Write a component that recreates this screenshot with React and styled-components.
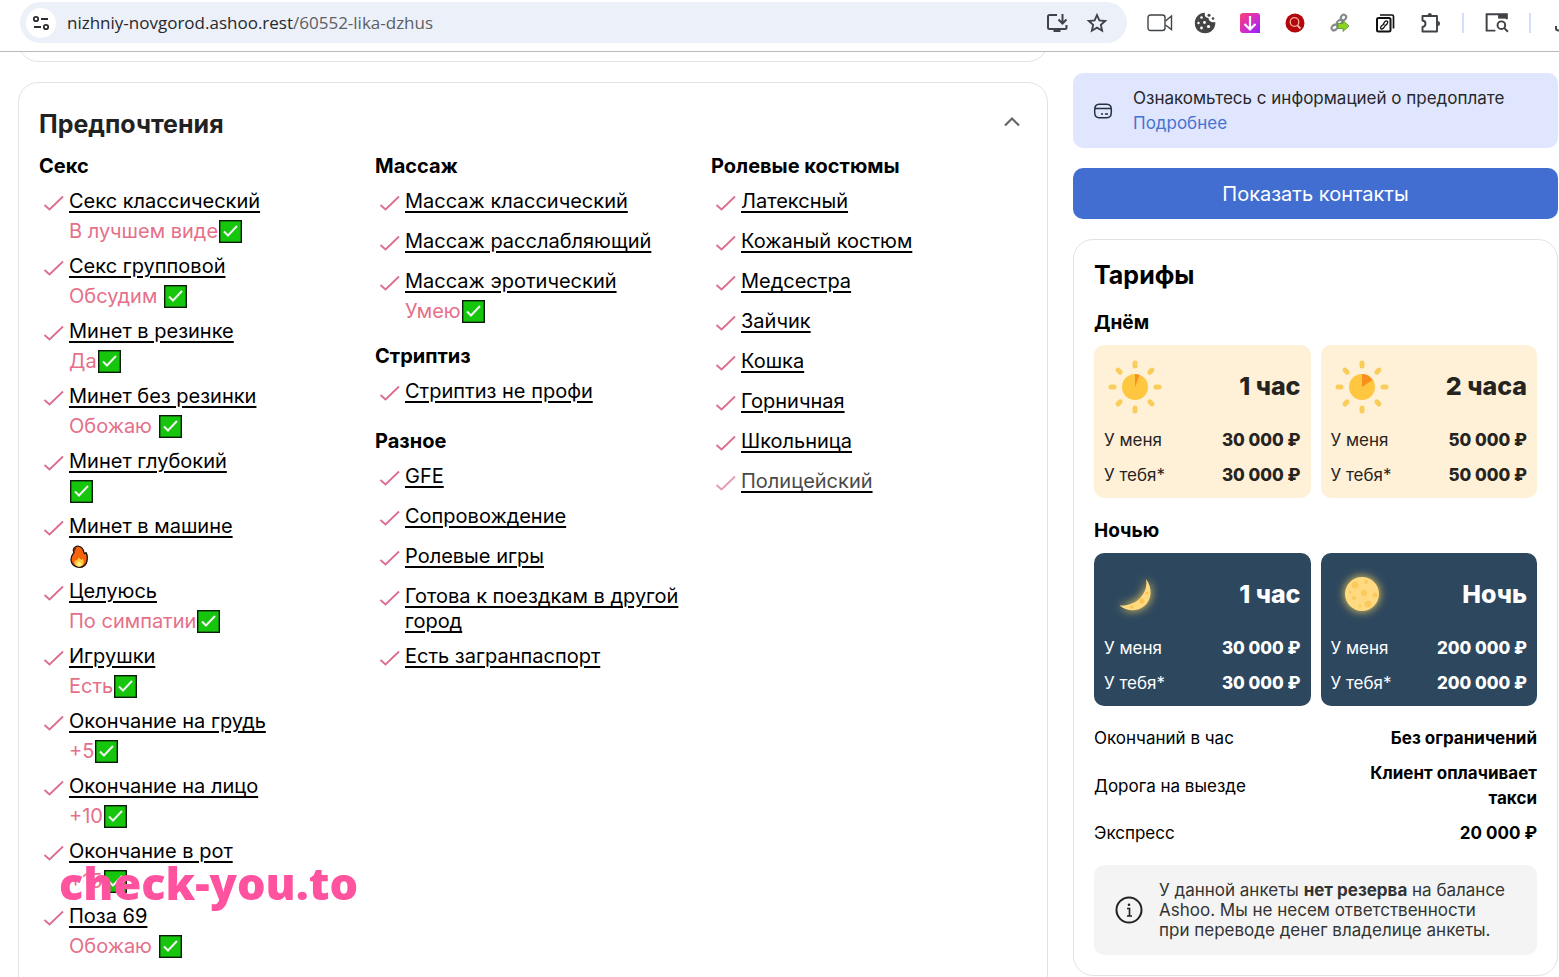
import React from "react";
import styled, { createGlobalStyle } from "styled-components";

const GlobalStyle = createGlobalStyle`
  * {
    box-sizing: border-box;
  }

  body {
    margin: 0;
    background: #ffffff;
    color: #000000;
    font-family: Inter, "Liberation Sans", sans-serif;
    font-size: 20px;
    line-height: 25px;
  }

  h2, h3, p, ul, dl, dd {
    margin: 0;
    padding: 0;
  }

  ul {
    list-style: none;
  }

  button {
    font-family: inherit;
    border: none;
    background: none;
    padding: 0;
    cursor: pointer;
  }
`;

const Layout = styled.div`
  display: flex;
  flex-direction: column;
  height: 100vh;
`;

/* browser bar */

const TopBar = styled.header`
  display: flex;
  align-items: center;
  flex: none;
  padding: 2px 0 8px 20px;
  border-bottom: 1px solid #b9b9b9;
  overflow: hidden;
`;

const AddressBar = styled.div`
  flex: 1;
  min-width: 0;
  height: 41px;
  margin-right: 10px;
  padding: 0 10px 0 6px;
  display: flex;
  align-items: center;
  border-radius: 21px;
  background: #ecf0f9;
`;

const SiteInfo = styled.button`
  flex: none;
  width: 30px;
  height: 30px;
  margin-right: 11px;
  display: flex;
  align-items: center;
  justify-content: center;
  border-radius: 50%;
  background: #ffffff;
`;

const AddressText = styled.div`
  flex: 1;
  min-width: 0;
  color: #5b5e63;
  font-family: "Open Sans", sans-serif;
  font-size: 17px;
  white-space: nowrap;

  b {
    color: #26282b;
    font-weight: 400;
  }
`;

const BarButton = styled.button`
  flex: none;
  width: ${({ $width }) => $width || 45}px;
  height: 40px;
  display: flex;
  align-items: center;
  justify-content: center;
  color: #3f4246;
`;

const BarDivider = styled.span`
  flex: none;
  width: 2px;
  height: 20px;
  margin: 0 10px;
  background: #d2defa;
`;

/* page */

const Scroller = styled.main`
  flex: 1;
  min-height: 0;
  overflow-y: auto;
  scrollbar-width: none;
  display: grid;
  grid-template-columns: minmax(0, 1fr) 485px;
  gap: 25px;
  align-items: start;
  padding: 0 1px 0 18px;
`;

const Card = styled.section`
  padding: 20px;
  border: 1px solid #e2e2e2;
  border-radius: 20px;
  background: #ffffff;
`;

const PreviousCard = styled(Card)`
  margin: -32px 0 20px;
`;

const CardHeader = styled.div`
  display: flex;
  align-items: center;
  justify-content: space-between;
  height: 41px;
  margin-bottom: 10px;
  padding-right: 5px;
`;

const CardTitle = styled.h2`
  color: ${({ $color }) => $color || "#000000"};
  font-size: 25px;
  line-height: 30px;
  font-weight: 700;
`;

const Columns = styled.div`
  display: grid;
  grid-template-columns: repeat(3, minmax(0, 1fr));
  gap: 20px;
`;

const Group = styled.div`
  padding-bottom: 10px;

  h3 {
    margin-bottom: 10px;
    font-size: 20px;
    font-weight: 700;
  }
`;

const Item = styled.li`
  display: grid;
  grid-template-columns: 30px minmax(0, 1fr);
  padding-bottom: 10px;

  > svg {
    margin: 5px 0 0 4px;
    opacity: ${({ $faded }) => ($faded ? 0.7 : 1)};
  }
`;

const ItemName = styled.div`
  min-height: 30px;

  a {
    color: ${({ $faded }) => ($faded ? "#4a4a4a" : "#000000")};
    text-decoration: underline;
    text-decoration-color: #000000;
    text-decoration-thickness: 2px;
    text-underline-offset: 3px;
  }
`;

const ItemNote = styled.p`
  grid-column: 2;
  display: flex;
  align-items: center;
  height: 25px;
  color: #e5708a;
  white-space: pre;

  svg {
    margin-left: 1px;
  }
`;

/* sidebar */

const Sidebar = styled.aside`
  padding-top: 21px;
`;

const Prepay = styled.div`
  display: flex;
  align-items: center;
  gap: 20px;
  padding: 13px 20px 12px;
  border-radius: 10px;
  background: #dfe6fe;
  color: #26282b;
  font-size: 17px;

  a {
    display: block;
    color: #4872cf;
    text-decoration: none;
  }
`;

const ContactButton = styled.button`
  display: block;
  width: 100%;
  height: 51px;
  margin: 20px 0;
  border-radius: 10px;
  background: #416ed0;
  color: #ffffff;
  font-size: 20px;
`;

const PeriodTitle = styled.h3`
  margin: 20px 0 10px;
  font-size: 19px;
  font-weight: 700;
`;

const Prices = styled.div`
  display: grid;
  grid-template-columns: 1fr 1fr;
  gap: 10px;
`;

const PriceCard = styled.div`
  display: flex;
  flex-direction: column;
  gap: 10px;
  padding: 10px;
  border-radius: 10px;
  background: ${({ $night }) => ($night ? "#2d475e" : "#fff1d8")};
  color: ${({ $night }) => ($night ? "#ffffff" : "#26241f")};
  font-size: 17px;
`;

const PriceHead = styled.div`
  display: flex;
  align-items: center;
  justify-content: space-between;
  height: 63px;
  font-size: 25px;
  font-weight: 800;
`;

const PriceRow = styled.div`
  display: flex;
  justify-content: space-between;

  b {
    font-weight: 800;
  }
`;

const Details = styled.dl`
  display: flex;
  flex-direction: column;
  gap: 10px;
  margin: 20px 0 19px;
  font-size: 17px;
`;

const DetailRow = styled.div`
  display: flex;
  align-items: center;
  justify-content: space-between;

  dd {
    max-width: 190px;
    font-weight: 700;
    text-align: right;
  }
`;

const Notice = styled.div`
  display: flex;
  align-items: center;
  gap: 15px;
  padding: 15px 20px;
  border-radius: 10px;
  background: #f4f4f4;
  color: #333333;
  font-size: 17px;
  line-height: 20px;

  svg {
    flex: none;
  }
`;

const Watermark = styled.div`
  position: fixed;
  left: 59px;
  bottom: 64px;
  color: #ff529f;
  font-family: "Open Sans", sans-serif;
  font-size: 45px;
  line-height: 60px;
  font-weight: 800;
  pointer-events: none;
`;

/* drawings */

const CheckIcon = () => (
  <svg width="22" height="20" viewBox="0 0 22 20" fill="none" stroke="#dc6d8c" strokeWidth="1.800">
    <path d="M1.500 11L6.500 15.500L20 2.500" />
  </svg>
);

const GreenCheck = () => (
  <svg width="23" height="23" viewBox="0 0 23 23">
    <rect x="0.700" y="0.700" width="21.600" height="21.600" fill="#16c60c" stroke="#0b1d0a" strokeWidth="1.400" />
    <path d="M5 11.500L9 15.500L18 6" fill="none" stroke="#f2f2f2" strokeWidth="2" />
  </svg>
);

const Flame = () => (
  <svg width="18" height="23" viewBox="0 0 18 23">
    <path
      d="M6 1.500C8 .5 11.500 1.500 13 4.500C14 6.500 13.500 8 14.500 8.500C15.300 8.500 15.500 7.500 16.200 7.800C17.500 10 17.500 13 17 16C16.200 20 13 22.300 9 22.300C4.500 22.300 1 19 1 14.500C1 11 2.500 9.500 4 7.500C3 5.500 3 3 6 1.500Z"
      fill="#f7630c"
      stroke="#1c100a"
      strokeWidth="1.300"
    />
    <path d="M3.800 7.200C3 5 4 2.500 6.200 1.900C6.500 4 5.500 5.500 3.800 7.200Z" fill="#7b2a12" />
    <path d="M9 12.500C10 14 11 14 11.500 15C12.300 14.800 12.300 14 13 13.800C14.500 18 13 21.400 9.500 21.600C5.500 21.600 3.500 18.500 5 15C6 16 7 15.500 7.500 14.500Z" fill="#ffc83d" />
    <path d="M9 16.500L12 19C11.500 21 10.500 21.500 9 21.500C7.500 21.500 6.500 20.500 6.500 19Z" fill="#fff08a" />
  </svg>
);

const RAYS = [0, 45, 90, 135, 180, 225, 270, 315];

const Sun = ({ slice }) => (
  <svg width="62" height="62" viewBox="0 0 62 62">
    {RAYS.map((angle) => (
      <rect key={angle} x="28.500" y="4.500" width="5" height="8" rx="2.500" fill="#f9cd59" transform={`rotate(${angle} 31 31)`} />
    ))}
    <circle cx="31" cy="31" r="13" fill="#ffc740" />
    <path d={slice} fill="#f9901e" />
  </svg>
);

const Crescent = () => (
  <svg width="62" height="62" viewBox="0 0 62 62">
    <defs>
      <filter id="crescentGlow" x="-60%" y="-60%" width="220%" height="220%">
        <feGaussianBlur stdDeviation="5" />
      </filter>
    </defs>
    <path d="M42 15C49 24 48 37 39 43C32 48 22 47 15.500 41.500C24 42 32 39 37 33C42 27 43 21 42 15Z" fill="#ffd65c" filter="url(#crescentGlow)" />
    <path d="M42 15C49 24 48 37 39 43C32 48 22 47 15.500 41.500C24 42 32 39 37 33C42 27 43 21 42 15Z" fill="#ffda80" />
    <circle cx="38" cy="37" r="2.500" fill="#fbc552" />
    <circle cx="43" cy="29" r="1.500" fill="#fbc552" />
    <circle cx="28" cy="43" r="1.800" fill="#fbc552" />
  </svg>
);

const FullMoon = () => (
  <svg width="62" height="62" viewBox="0 0 62 62">
    <defs>
      <filter id="moonGlow" x="-50%" y="-50%" width="200%" height="200%">
        <feGaussianBlur stdDeviation="5" />
      </filter>
    </defs>
    <circle cx="31" cy="30" r="17" fill="#ffd65c" filter="url(#moonGlow)" />
    <circle cx="31" cy="30" r="17" fill="#ffda80" />
    <g fill="#fbc95c">
      <circle cx="24" cy="21" r="3.500" />
      <circle cx="33" cy="29" r="3" />
      <circle cx="37" cy="40" r="3.500" />
      <circle cx="23" cy="34" r="2" />
      <circle cx="35" cy="18" r="2" />
      <circle cx="44" cy="31" r="2.500" />
      <circle cx="19" cy="28" r="1.500" />
      <circle cx="29" cy="42" r="1.500" />
    </g>
  </svg>
);

const CardIcon = () => (
  <svg width="20" height="20" viewBox="0 0 20 20" fill="none" stroke="#26303f" strokeWidth="1.500">
    <path d="M1.800 7.500C2 4.500 3 3.500 6 3.300Q10 3 14 3.300C17 3.500 18 4.500 18.200 7.500Q18.500 10 18.200 12.500C18 15.500 17 16.500 14 16.700Q10 17 6 16.700C3 16.500 2 15.500 1.800 12.500Q1.500 10 1.800 7.500ZM2 7.500H18M8 13H10M12 13H15" />
  </svg>
);

const InfoIcon = () => (
  <svg width="30" height="30" viewBox="0 0 30 30" fill="none" stroke="#222222" strokeWidth="2">
    <circle cx="15" cy="15" r="12.500" />
    <path d="M13 13.500H15.500V21M13 21H18" strokeWidth="1.600" />
    <circle cx="15" cy="9.800" r="1.300" fill="#222222" stroke="none" />
  </svg>
);

const TuneIcon = () => (
  <svg width="18" height="18" viewBox="0 0 18 18" fill="none" stroke="#2b2d30" strokeWidth="1.800">
    <circle cx="4" cy="5" r="2.200" />
    <path d="M9 5H16M2 13H9" />
    <circle cx="14" cy="13" r="2.200" />
  </svg>
);

const InstallIcon = () => (
  <svg width="24" height="24" viewBox="0 0 24 24" fill="none" stroke="currentColor" strokeWidth="2">
    <path d="M12 4H4.500Q3 4 3 5.500V16.500Q3 18 4.500 18H20Q21.500 18 21.500 16.500V14M17.500 3V12M13.500 8.500L17.500 12.500L21.500 8.500" />
    <path d="M8.500 18H15.500V21H8.500Z" fill="currentColor" stroke="none" />
  </svg>
);

const StarIcon = () => (
  <svg width="22" height="22" viewBox="0 0 24 24" fill="none" stroke="currentColor" strokeWidth="2">
    <path d="M12 3.300L14.600 9.200L21 9.800L16.200 14.100L17.600 20.400L12 17.100L6.400 20.400L7.800 14.100L3 9.800L9.400 9.200Z" />
  </svg>
);

const VideoIcon = () => (
  <svg width="26" height="18" viewBox="0 0 26 18" fill="none" stroke="currentColor" strokeWidth="1.400">
    <rect x="1" y="1" width="17" height="15.500" rx="2.500" />
    <path d="M18.500 7L24.500 2V15.500L18.500 11" />
  </svg>
);

const CookieIcon = () => (
  <svg width="22" height="22" viewBox="0 0 22 22">
    <path d="M11 .8C10 4 12 6 14.500 6C14.500 9 17.500 11 21.300 10C21.800 16.500 17 21.300 11 21.300C5 21.300 .8 17 .8 11C.8 5 5.500 .6 11 .8Z" fill="#454545" />
    <circle cx="15" cy="3.200" r="1.500" fill="#454545" />
    <circle cx="19" cy="6.500" r="1.300" fill="#454545" />
    <g fill="#ffffff">
      <circle cx="7.500" cy="5.500" r="1.300" />
      <circle cx="4.500" cy="11" r="1.200" />
      <circle cx="10.500" cy="10.500" r="1.400" />
      <circle cx="7.500" cy="16" r="1.400" />
      <circle cx="14.500" cy="14.500" r="1.600" />
    </g>
  </svg>
);

const DownloadIcon = () => (
  <svg width="22" height="22" viewBox="0 0 22 22">
    <defs>
      <linearGradient id="downloadFill" x1="0" y1="0" x2="1" y2="1">
        <stop offset="0" stopColor="#ff3f72" />
        <stop offset="0.600" stopColor="#cc2bd0" />
        <stop offset="1" stopColor="#8c24ff" />
      </linearGradient>
    </defs>
    <path d="M4 1H18Q21 1 21 4V21H4Q1 21 1 18V4Q1 1 4 1Z" fill="url(#downloadFill)" />
    <path d="M11 4V17M5.500 12L11 17.500L16.500 12" fill="none" stroke="#ffffff" strokeWidth="2.200" />
  </svg>
);

const RedSearchIcon = () => (
  <svg width="20" height="20" viewBox="0 0 20 20">
    <circle cx="10" cy="10" r="9.500" fill="#b3070b" />
    <circle cx="9.500" cy="9" r="4.300" fill="none" stroke="#f6b5a8" strokeWidth="1.300" />
    <path d="M12.500 12.500L15.500 15.500" stroke="#f6b5a8" strokeWidth="1.800" />
  </svg>
);

const ChainIcon = () => (
  <svg width="20" height="20" viewBox="0 0 20 20">
    <g fill="none" stroke="#878b8e" strokeWidth="2.200">
      <ellipse cx="13.500" cy="4.500" rx="2.500" ry="2.800" transform="rotate(35 13.500 4.500)" />
      <ellipse cx="9.500" cy="9.500" rx="2" ry="3" transform="rotate(50 9.500 9.500)" />
      <ellipse cx="4.500" cy="14.500" rx="2.500" ry="3.200" transform="rotate(50 4.500 14.500)" />
    </g>
    <path d="M8 10.500H13V7.500L19 13L13 18.500V15.500H8Z" fill="#8ed321" stroke="#52932a" strokeWidth="0.800" />
  </svg>
);

const LinkPagesIcon = () => (
  <svg width="20" height="20" viewBox="0 0 20 20" fill="none" stroke="#111111" strokeWidth="2">
    <rect x="2" y="5" width="13.500" height="13.500" rx="1.500" />
    <path d="M5 2H17Q18.500 2 18.500 3.500V15.500" strokeWidth="1.700" />
    <path d="M8 11.500L10 8.500Q11.500 7.200 12.600 8.500Q13 9.500 12 11L10.500 12.500M9.500 10.800L7 12.500Q4.800 14.500 6 15.800Q7.500 16.500 9 14.500L10.500 12" strokeWidth="1.300" />
  </svg>
);

const PuzzleIcon = () => (
  <svg width="22" height="22" viewBox="0 0 22 22" fill="none" stroke="currentColor" strokeWidth="1.900">
    <path d="M3.500 4H18V19.500H3.500V15Q6.500 14.500 6.500 11.700Q6.500 9 3.500 8.500Z" strokeLinejoin="round" />
    <path d="M8.500 3.500Q8.500 1 10.800 1Q13 1 13 3.500ZM18.500 9Q21 9 21 11.500Q21 14 18.500 14Z" fill="currentColor" stroke="none" />
  </svg>
);

const TabSearchIcon = () => (
  <svg width="24" height="22" viewBox="0 0 22 20" fill="none" stroke="currentColor" strokeWidth="1.800">
    <path d="M9.500 17H1.500V2H20V6.500" />
    <path d="M12 2H20V6H12Z" fill="currentColor" stroke="none" />
    <circle cx="15" cy="12" r="3.500" />
    <path d="M17.500 14.500L21 18" />
  </svg>
);

const TrayIcon = () => (
  <svg width="18" height="20" viewBox="0 0 18 20" fill="none" stroke="currentColor" strokeWidth="2">
    <path d="M15 13V15.500Q15 17.500 18 17.500" />
  </svg>
);

const Chevron = () => (
  <svg width="20" height="14" viewBox="0 0 20 14" fill="none" stroke="#666666" strokeWidth="2.200">
    <path d="M3 10.500L10 3.500L17 10.500" />
  </svg>
);

const extensions = [
  { label: "Запись видео", icon: <VideoIcon /> },
  { label: "Cookie", icon: <CookieIcon /> },
  { label: "Загрузки", icon: <DownloadIcon /> },
  { label: "Поиск", icon: <RedSearchIcon /> },
  { label: "Переадресация", icon: <ChainIcon /> },
  { label: "Ссылки", icon: <LinkPagesIcon /> },
  { label: "Расширения", icon: <PuzzleIcon /> },
];

const columns = [
  [
    {
      title: "Секс",
      items: [
        { name: "Секс классический", note: "В лучшем виде" },
        { name: "Секс групповой", note: "Обсудим " },
        { name: "Минет в резинке", note: "Да" },
        { name: "Минет без резинки", note: "Обожаю " },
        { name: "Минет глубокий", note: "" },
        { name: "Минет в машине", fire: true },
        { name: "Целуюсь", note: "По симпатии" },
        { name: "Игрушки", note: "Есть" },
        { name: "Окончание на грудь", note: "+5" },
        { name: "Окончание на лицо", note: "+10" },
        { name: "Окончание в рот", note: "+15" },
        { name: "Поза 69", note: "Обожаю " },
      ],
    },
  ],
  [
    {
      title: "Массаж",
      items: [
        { name: "Массаж классический" },
        { name: "Массаж расслабляющий" },
        { name: "Массаж эротический", note: "Умею" },
      ],
    },
    { title: "Стриптиз", items: [{ name: "Стриптиз не профи" }] },
    {
      title: "Разное",
      items: [
        { name: "GFE" },
        { name: "Сопровождение" },
        { name: "Ролевые игры" },
        { name: "Готова к поездкам в другой город" },
        { name: "Есть загранпаспорт" },
      ],
    },
  ],
  [
    {
      title: "Ролевые костюмы",
      items: [
        { name: "Латексный" },
        { name: "Кожаный костюм" },
        { name: "Медсестра" },
        { name: "Зайчик" },
        { name: "Кошка" },
        { name: "Горничная" },
        { name: "Школьница" },
        { name: "Полицейский", faded: true },
      ],
    },
  ],
];

const periods = [
  {
    title: "Днём",
    cards: [
      { title: "1 час", icon: <Sun slice="M31 31V18Q33.500 18 35.500 19Z" />, price: "30 000 ₽" },
      { title: "2 часа", icon: <Sun slice="M31 31V18Q38 18 41.500 24Z" />, price: "50 000 ₽" },
    ],
  },
  {
    title: "Ночью",
    night: true,
    cards: [
      { title: "1 час", icon: <Crescent />, price: "30 000 ₽" },
      { title: "Ночь", icon: <FullMoon />, price: "200 000 ₽" },
    ],
  },
];

const Preference = ({ name, note, fire, faded }) => (
  <Item $faded={faded}>
    <CheckIcon />
    <ItemName $faded={faded}>
      <a href="#preference">{name}</a>
    </ItemName>
    {(note !== undefined || fire) && (
      <ItemNote>
        {note}
        {fire ? <Flame /> : <GreenCheck />}
      </ItemNote>
    )}
  </Item>
);

const App = () => (
  <Layout>
    <GlobalStyle />
    <TopBar>
      <AddressBar>
        <SiteInfo aria-label="Сведения о сайте">
          <TuneIcon />
        </SiteInfo>
        <AddressText>
          <b>nizhniy-novgorod.ashoo.rest</b>/60552-lika-dzhus
        </AddressText>
        <BarButton $width={40} aria-label="Установить">
          <InstallIcon />
        </BarButton>
        <BarButton $width={40} aria-label="В закладки">
          <StarIcon />
        </BarButton>
      </AddressBar>
      {extensions.map(({ label, icon }) => (
        <BarButton key={label} aria-label={label}>
          {icon}
        </BarButton>
      ))}
      <BarDivider />
      <BarButton aria-label="Поиск вкладок">
        <TabSearchIcon />
      </BarButton>
      <BarDivider />
      <BarButton $width={18} aria-label="Скачанные файлы">
        <TrayIcon />
      </BarButton>
    </TopBar>

    <Scroller>
      <div>
        <PreviousCard />
        <Card>
          <CardHeader>
            <CardTitle $color="#222222">Предпочтения</CardTitle>
            <button aria-label="Свернуть">
              <Chevron />
            </button>
          </CardHeader>
          <Columns>
            {columns.map((groups) => (
              <div key={groups[0].title}>
                {groups.map(({ title, items }) => (
                  <Group key={title}>
                    <h3>{title}</h3>
                    <ul>
                      {items.map((item) => (
                        <Preference key={item.name} {...item} />
                      ))}
                    </ul>
                  </Group>
                ))}
              </div>
            ))}
          </Columns>
        </Card>
      </div>

      <Sidebar>
        <Prepay>
          <CardIcon />
          <div>
            Ознакомьтесь с информацией о предоплате
            <a href="#prepay">Подробнее</a>
          </div>
        </Prepay>
        <ContactButton>Показать контакты</ContactButton>
        <Card>
          <CardTitle>Тарифы</CardTitle>
          {periods.map(({ title, night, cards }) => (
            <React.Fragment key={title}>
              <PeriodTitle>{title}</PeriodTitle>
              <Prices>
                {cards.map((card) => (
                  <PriceCard key={card.title} $night={night}>
                    <PriceHead>
                      {card.icon}
                      {card.title}
                    </PriceHead>
                    <PriceRow>
                      У меня <b>{card.price}</b>
                    </PriceRow>
                    <PriceRow>
                      У тебя* <b>{card.price}</b>
                    </PriceRow>
                  </PriceCard>
                ))}
              </Prices>
            </React.Fragment>
          ))}
          <Details>
            <DetailRow>
              <dt>Окончаний в час</dt>
              <dd>Без ограничений</dd>
            </DetailRow>
            <DetailRow>
              <dt>Дорога на выезде</dt>
              <dd>Клиент оплачивает такси</dd>
            </DetailRow>
            <DetailRow>
              <dt>Экспресс</dt>
              <dd>20 000 ₽</dd>
            </DetailRow>
          </Details>
          <Notice>
            <InfoIcon />
            <p>
              У данной анкеты <b>нет резерва</b> на балансе Ashoo. Мы не несем ответственности при&nbsp;переводе денег
              владелице анкеты.
            </p>
          </Notice>
        </Card>
      </Sidebar>
    </Scroller>
    <Watermark>check-you.to</Watermark>
  </Layout>
);

export default App;
